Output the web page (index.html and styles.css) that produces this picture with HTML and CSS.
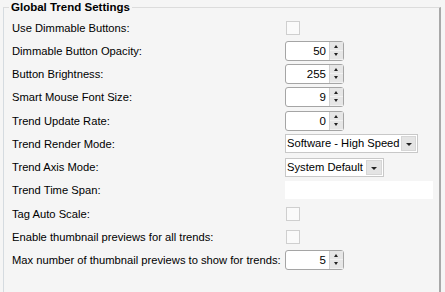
FILE: index.html
```html
<!DOCTYPE html>
<html lang="en">
<head>
    <meta charset="UTF-8">
    <title>Global Trend Settings</title>
    <link rel="stylesheet" href="styles.css">
</head>
<body>
    <fieldset class="group">
        <legend>Global Trend Settings</legend>
        <div class="rows">
            <label>Use Dimmable Buttons:</label>
            <div><span class="check"></span></div>

            <label>Dimmable Button Opacity:</label>
            <div class="spin"><span class="val">50</span><span class="btns"><i class="up"></i><i class="down"></i></span></div>

            <label>Button Brightness:</label>
            <div class="spin"><span class="val">255</span><span class="btns"><i class="up"></i><i class="down"></i></span></div>

            <label>Smart Mouse Font Size:</label>
            <div class="spin"><span class="val">9</span><span class="btns"><i class="up"></i><i class="down"></i></span></div>

            <label>Trend Update Rate:</label>
            <div class="spin"><span class="val">0</span><span class="btns"><i class="up"></i><i class="down"></i></span></div>

            <label>Trend Render Mode:</label>
            <div class="combo wide"><span class="val">Software - High Speed</span><span class="arrow"></span></div>

            <label>Trend Axis Mode:</label>
            <div class="combo"><span class="val">System Default</span><span class="arrow"></span></div>

            <label>Trend Time Span:</label>
            <div><span class="blank"></span></div>

            <label>Tag Auto Scale:</label>
            <div><span class="check"></span></div>

            <label>Enable thumbnail previews for all trends:</label>
            <div><span class="check"></span></div>

            <label>Max number of thumbnail previews to show for trends:</label>
            <div class="spin"><span class="val">5</span><span class="btns"><i class="up"></i><i class="down"></i></span></div>
        </div>
    </fieldset>
</body>
</html>
```

FILE: styles.css
```css
body {
    margin: 0;
    background-color: #f5f5f5;
    font-family: "Liberation Sans", Arial, sans-serif;
    font-size: 11.2px;
    color: #000;
    height: 292px;
    overflow: hidden;
}
.group {
    margin: 0 4px 0 3px;
    padding: 0;
    height: 300px;
    border: 1px solid #d5dbe0;
    border-right: 2px solid #a8a8a8;
    border-top-color: #dcdcdc;
    box-sizing: border-box;
}
.group legend {
    font-weight: bold;
    font-size: 11.5px;
    padding: 0 2px;
    margin-left: 5px;
    line-height: 15px;
}
.rows {
    display: grid;
    grid-template-columns: 273px 1fr;
    grid-auto-rows: 23.25px;
    align-items: center;
    padding: 1px 0 0 8px;
}
.rows label {
    white-space: nowrap;
}
.check {
    display: block;
    width: 12px;
    height: 12px;
    margin-left: 1px;
    border: 1px solid #cfcfcf;
    background-color: #fafafa;
}
.spin {
    display: flex;
    width: 59px;
    height: 20px;
    box-sizing: border-box;
    border: 1px solid #a5a5a5;
    border-radius: 3px;
    background-color: #fff;
}
.spin .val {
    flex: 1;
    text-align: right;
    padding-right: 3px;
    line-height: 18px;
    font-size: 11.5px;
}
.spin .btns {
    width: 13px;
    display: flex;
    flex-direction: column;
    border-left: 1px solid #d0d0d0;
    background-color: #e6e6e6;
}
.spin i {
    flex: 1;
    position: relative;
    border-bottom: 1px solid #f2f2f2;
}
.spin i::after {
    content: "";
    position: absolute;
    left: 4px;
    top: 3px;
    border-left: 2px solid transparent;
    border-right: 2px solid transparent;
}
.spin i.up::after {
    border-bottom: 3px solid #222;
}
.spin i.down::after {
    border-top: 3px solid #222;
    top: 2px;
}
.combo {
    display: flex;
    width: 99px;
    height: 19px;
    box-sizing: border-box;
    border: 1px solid #c8c8c8;
    background-color: #fff;
}
.combo.wide {
    width: 133px;
}
.combo .val {
    flex: 1;
    padding-left: 1px;
    line-height: 17px;
    font-size: 11.2px;
    white-space: nowrap;
}
.combo .arrow {
    width: 14px;
    margin: 1px;
    border: 1px solid #d6d6d6;
    background-color: #e4e4e4;
    position: relative;
}
.combo .arrow::after {
    content: "";
    position: absolute;
    left: 4px;
    top: 6px;
    border-left: 3px solid transparent;
    border-right: 3px solid transparent;
    border-top: 3px solid #222;
}
.blank {
    display: block;
    width: 148px;
    height: 18px;
    background-color: #fff;
}
```
